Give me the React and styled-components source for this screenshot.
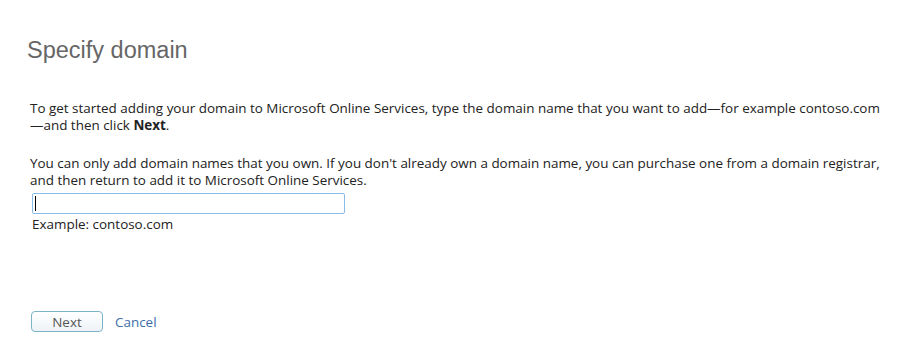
import React from 'react'
import styled, { createGlobalStyle } from 'styled-components'

const Global = createGlobalStyle`
  body {
    margin: 0;
    background: #fff;
  }
`

const Page = styled.div`
  padding: 36px 0 0 27px;
  width: 860px;
  font-family: 'Open Sans', 'Liberation Sans', sans-serif;
  font-size: 13.45px;
  color: #222;
`

const Title = styled.h1`
  margin: 0 0 36px 0;
  font-family: 'Liberation Sans', Arial, sans-serif;
  font-weight: normal;
  font-size: 23.5px;
  line-height: 28px;
  color: #666;
`

const Para = styled.p`
  margin: 0 0 ${p => p.gap}px 3px;
  line-height: 17px;
`

const Field = styled.div`
  position: relative;
  margin-left: 5px;
  width: 313px;
`

const Input = styled.input`
  display: block;
  box-sizing: border-box;
  width: 313px;
  height: 21px;
  border: 1px solid #8bbbe8;
  border-radius: 2px;
  outline: none;
  background: #fff;
  padding: 0 4px;
`

const Caret = styled.span`
  position: absolute;
  left: 3px;
  top: 3px;
  width: 1px;
  height: 15px;
  background: #000;
`

const Hint = styled.div`
  margin: 2px 0 0 5px;
  line-height: 17px;
`

const Actions = styled.div`
  display: flex;
  align-items: center;
  gap: 12px;
  margin: 78px 0 0 4px;
`

const Button = styled.button`
  box-sizing: border-box;
  width: 72px;
  height: 21px;
  padding: 0;
  border: 1px solid #7bb3c9;
  border-radius: 4px;
  background: linear-gradient(#ffffff, #eef3f7);
  font-family: 'Open Sans', 'Liberation Sans', sans-serif;
  font-size: 13.45px;
  color: #555;
`

const Link = styled.a`
  color: #3d6ea8;
  text-decoration: none;
  font-size: 13.45px;
`

export default function App() {
  return (
    <Page>
      <Global />
      <Title>Specify domain</Title>
      <Para gap={21}>
        To get started adding your domain to Microsoft Online Services, type the domain name that you want to add—for example contoso.com—and then click <b>Next</b>.
      </Para>
      <Para gap={4}>
        You can only add domain names that you own. If you don't already own a domain name, you can purchase one from a domain registrar, and then return to add it to Microsoft Online Services.
      </Para>
      <Field>
        <Input type="text" />
        <Caret />
      </Field>
      <Hint>Example: contoso.com</Hint>
      <Actions>
        <Button>Next</Button>
        <Link href="#">Cancel</Link>
      </Actions>
    </Page>
  )
}
